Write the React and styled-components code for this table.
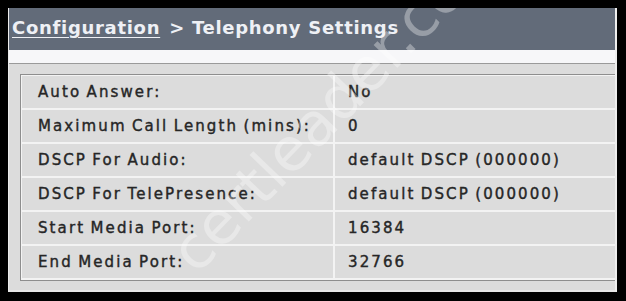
import React from "react";
import styled, { createGlobalStyle } from "styled-components";

const Global = createGlobalStyle`
  html, body {
    margin: 0;
    padding: 0;
    background: #000;
  }
  body {
    font-family: "DejaVu Sans", Verdana, sans-serif;
  }
`;

const Screen = styled.div`
  width: 626px;
  height: 301px;
  background: #000;
  padding: 8px 9px 9px 8px;
  box-sizing: border-box;
`;

const Panel = styled.div`
  position: relative;
  height: 100%;
  background: #dcdcdc;
  border-left: 1px solid #ececec;
  border-right: 2px solid #eeeeee;
  border-bottom: 2px solid #e6e6e6;
  box-sizing: border-box;
  overflow: hidden;
  display: flex;
  flex-direction: column;
`;

const Header = styled.div`
  height: 42px;
  flex: none;
  box-sizing: border-box;
  background: #626b79;
  display: flex;
  align-items: center;
  padding: 0 0 4px 3px;
  color: #eef0f5;
  font-size: 18px;
  font-weight: 700;
  letter-spacing: 0.7px;
  white-space: nowrap;
`;

const Crumb = styled.a`
  color: inherit;
  text-decoration: underline;
  text-underline-offset: 3px;
  text-decoration-thickness: 1px;
  margin-right: 9px;
`;

const Strip = styled.div`
  height: 13px;
  flex: none;
  background: #f7f7f9;
  border-bottom: 1px solid #9a9a9a;
`;

const Body = styled.div`
  flex: 1;
  padding: 10px 0 0 11px;
`;

const Table = styled.div`
  display: grid;
  grid-template-columns: 311px 1fr;
  grid-auto-rows: 32px;
  gap: 2px;
  background: #f3f3f3;
  border-top: 1px solid #8e8e8e;
  border-left: 1px solid #8e8e8e;
  border-bottom: 1px solid #8e8e8e;
  padding: 1px 0 2px 1px;
`;

const Cell = styled.div`
  background: #dcdcdc;
  display: flex;
  align-items: center;
  padding-left: ${(p) => (p.$value ? 13 : 16)}px;
  color: #262626;
  font-size: 15px;
  letter-spacing: 2.1px;
  word-spacing: -1.5px;
  -webkit-text-stroke: 0.4px #262626;
  white-space: nowrap;
  overflow: hidden;
`;

const Watermark = styled.div`
  position: absolute;
  left: 194px;
  top: 214px;
  transform: rotate(-46deg);
  transform-origin: 0 100%;
  font-size: 60px;
  line-height: 1;
  color: rgba(255, 255, 255, 0.34);
  pointer-events: none;
  white-space: nowrap;
`;

const rows = [
  ["Auto Answer:", "No"],
  ["Maximum Call Length (mins):", "0"],
  ["DSCP For Audio:", "default DSCP (000000)"],
  ["DSCP For TelePresence:", "default DSCP (000000)"],
  ["Start Media Port:", "16384"],
  ["End Media Port:", "32766"],
];

export default function App() {
  return (
    <>
      <Global />
      <Screen>
        <Panel>
          <Header>
            <Crumb>Configuration</Crumb>&gt; Telephony Settings
          </Header>
          <Strip />
          <Body>
            <Table>
              {rows.map(([label, value]) => (
                <React.Fragment key={label}>
                  <Cell>{label}</Cell>
                  <Cell $value>{value}</Cell>
                </React.Fragment>
              ))}
            </Table>
          </Body>
          <Watermark>certleader.com</Watermark>
        </Panel>
      </Screen>
    </>
  );
}
